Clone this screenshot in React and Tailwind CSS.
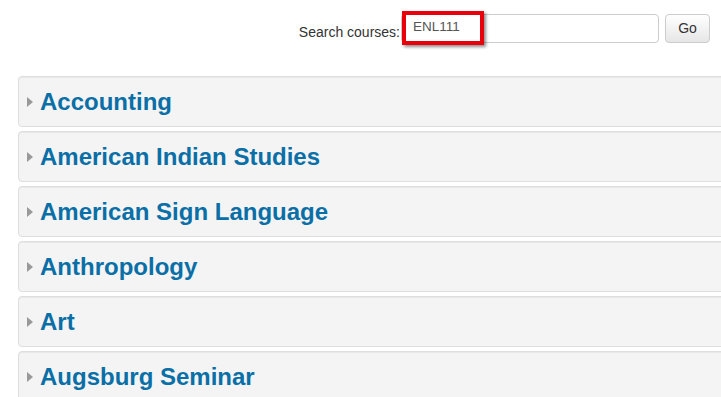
import { useState } from "react";

const subjects = [
  "Accounting",
  "American Indian Studies",
  "American Sign Language",
  "Anthropology",
  "Art",
  "Augsburg Seminar",
  "Biology",
];

export default function App() {
  const [query, setQuery] = useState("ENL111");

  return (
    <div className="w-[721px] h-[397px] overflow-hidden bg-white font-['Liberation_Sans',Arial,sans-serif]">
      {/* search bar */}
      <div className="flex justify-end items-center pt-[13px] pr-[11px]">
        <label className="text-[14px] text-[#333] mt-[9px]">Search courses:</label>
        <div className="relative ml-[1px]">
          <input
            value={query}
            onChange={(e) => setQuery(e.target.value)}
            className="w-[258px] h-[29px] border border-[#ccc] rounded-[4px] pl-[11px] pb-[3px] text-[13.5px] text-[#555] outline-none"
          />
          <div className="absolute left-[1px] top-[-3px] w-[82px] h-[34px] border-[4px] border-[#e8000b] shadow-[2px_2px_3px_rgba(0,0,0,0.45)] pointer-events-none"></div>
        </div>
        <button className="ml-[6px] w-[45px] h-[29px] border border-[#ccc] rounded-[4px] bg-gradient-to-b from-white to-[#e6e6e6] text-[14px] text-[#333]">
          Go
        </button>
      </div>

      {/* subject list */}
      <div className="pl-[18px] mt-[33px] mr-[-20px]">
        {subjects.map((name) => (
          <div
            key={name}
            className="h-[51px] mb-[4px] flex items-center bg-[#f4f4f4] border border-[#dedede] rounded-[4px] shadow-[inset_0_1px_1px_rgba(0,0,0,0.05)]"
          >
            <span className="ml-[8px] mr-[7px] w-0 h-0 border-y-[5px] border-y-transparent border-l-[6px] border-l-[#999]"></span>
            <span className="text-[24px] font-bold text-[#0a6fa6] leading-none">{name}</span>
          </div>
        ))}
      </div>
    </div>
  );
}
